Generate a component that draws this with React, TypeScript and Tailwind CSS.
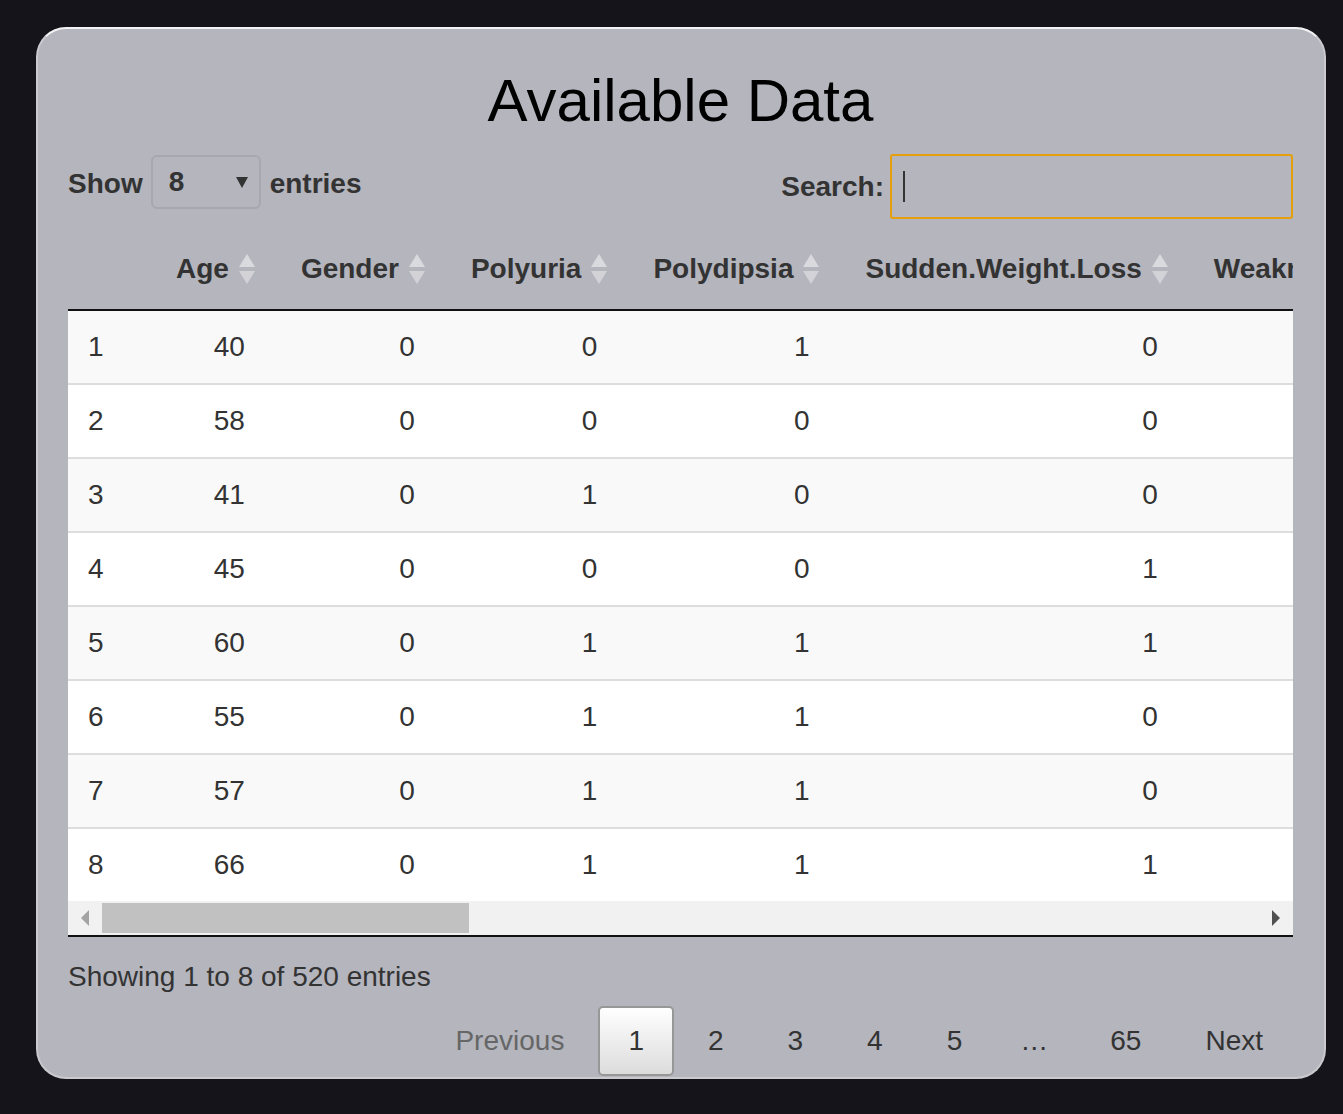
import React from 'react'

/* ─── Data ────────────────────────────────────────────── */
const columns = [
  'Age',
  'Gender',
  'Polyuria',
  'Polydipsia',
  'Sudden.Weight.Loss',
  'Weakness',
  'Polyphagia',
  'Genital.Thrush',
  'Visual.Blurring',
  'Itching',
  'Irritability',
  'Delayed.Healing',
  'Partial.Paresis',
  'Muscle.Stiffness',
  'Alopecia',
  'Obesity',
  'Class',
]

// fixed widths for the visible columns, the rest size themselves
const colWidth: Record<string, string> = {
  Age: 'w-[127px]',
  Gender: 'w-[170px]',
  Polyuria: 'w-[183px]',
  Polydipsia: 'w-[213px]',
  'Sudden.Weight.Loss': 'w-[348px]',
}

const rows: number[][] = [
  [40, 0, 0, 1, 0, 1, 0, 0, 0, 1, 0, 1, 0, 1, 1, 1, 1],
  [58, 0, 0, 0, 0, 1, 0, 0, 1, 0, 0, 0, 1, 0, 1, 0, 1],
  [41, 0, 1, 0, 0, 1, 1, 0, 0, 1, 0, 1, 0, 1, 1, 0, 1],
  [45, 0, 0, 0, 1, 1, 1, 1, 0, 1, 0, 1, 0, 0, 0, 0, 1],
  [60, 0, 1, 1, 1, 1, 1, 0, 1, 1, 1, 1, 1, 1, 1, 1, 1],
  [55, 0, 1, 1, 0, 1, 1, 0, 1, 1, 0, 1, 0, 1, 1, 1, 1],
  [57, 0, 1, 1, 0, 1, 1, 1, 0, 0, 0, 1, 1, 0, 0, 0, 1],
  [66, 0, 1, 1, 1, 1, 0, 0, 1, 1, 1, 0, 1, 1, 0, 0, 1],
]

const pages = ['1', '2', '3', '4', '5', '…', '65']

/* ─── Icons ───────────────────────────────────────────── */
function SortBoth() {
  return (
    <svg width="16" height="30" viewBox="0 0 16 30" className="absolute right-[10px] top-1/2 -translate-y-1/2">
      <polygon points="8,0 16,13 0,13" fill="#dadade" />
      <polygon points="0,17 16,17 8,30" fill="#d2d2d7" />
    </svg>
  )
}

/* ─── Component ───────────────────────────────────────── */
export default function App() {
  return (
    <div className="min-h-screen bg-[#15141a] pt-[27px] pb-[35px] font-['Liberation_Sans',Arial,sans-serif] text-[28px] leading-[40px] text-[#333]">
      <div className="ml-[36px] w-[1290px] rounded-[30px] border-2 border-[#c9c9ce] border-t-[#f2f2f4] bg-[#b4b5bd] pl-[30px] pr-[31px] pt-[39px] pb-[1px]">
        {/* Title */}
        <h1 className="text-center text-[60px] leading-[66px] font-normal text-black">Available Data</h1>

        {/* Controls */}
        <div className="mt-[20px] flex items-start justify-between">
          <div className="flex h-[56px] items-center font-bold">
            <span className="mt-[3px]">Show</span>
            <div className="mx-[8px] flex h-[54px] w-[110px] items-center justify-between rounded-[6px] border-2 border-[#a7a8af] pl-[16px] pr-[11px]">
              <span>8</span>
              <svg width="12" height="11" viewBox="0 0 12 11">
                <polygon points="0,0 12,0 6,11" fill="#333" />
              </svg>
            </div>
            <span className="mt-[3px] ml-[1px]">entries</span>
          </div>
          <div className="flex items-center font-bold">
            <span className="mr-[6px]">Search:</span>
            <div className="flex h-[65px] w-[403px] items-center rounded-[3px] border-2 border-[#e59f0c] pl-[11px]">
              <span className="block h-[31px] w-[2px] bg-[#333]" />
            </div>
          </div>
        </div>

        {/* Table */}
        <div className="mt-[10px] overflow-hidden">
          <table className="border-separate border-spacing-0 whitespace-nowrap">
            <thead>
              <tr>
                <th className="w-[72px] border-b-2 border-[#111] px-[36px] py-[20px] text-left font-bold"></th>
                {columns.map((c) => (
                  <th
                    key={c}
                    className={`relative border-b-2 border-[#111] px-[36px] py-[20px] text-right font-bold ${colWidth[c] ?? ''}`}
                  >
                    {c}
                    <SortBoth />
                  </th>
                ))}
              </tr>
            </thead>
            <tbody>
              {rows.map((r, i) => (
                <tr key={i} className={i % 2 === 0 ? 'bg-[#f9f9f9]' : 'bg-white'}>
                  <td className={`px-[20px] py-[16px] text-left ${i > 0 ? 'border-t-2 border-[#ddd]' : ''}`}>{i + 1}</td>
                  {r.map((v, j) => (
                    <td key={j} className={`px-[20px] py-[16px] text-right ${i > 0 ? 'border-t-2 border-[#ddd]' : ''}`}>
                      {v}
                    </td>
                  ))}
                </tr>
              ))}
            </tbody>
          </table>
        </div>

        {/* Scrollbar */}
        <div className="box-content flex h-[34px] items-stretch border-b-2 border-[#111] bg-[#f1f1f1]">
          <div className="flex w-[34px] items-center justify-center">
            <svg width="8" height="16" viewBox="0 0 8 16">
              <polygon points="8,0 8,16 0,8" fill="#a3a3a3" />
            </svg>
          </div>
          <div className="my-[2px] w-[367px] bg-[#c1c1c1]" />
          <div className="flex-1" />
          <div className="flex w-[34px] items-center justify-center">
            <svg width="8" height="16" viewBox="0 0 8 16">
              <polygon points="0,0 8,8 0,16" fill="#505050" />
            </svg>
          </div>
        </div>

        {/* Info */}
        <div className="pt-[20px]">Showing 1 to 8 of 520 entries</div>

        {/* Pagination */}
        <div className="mt-[9px] flex justify-end">
          <span className="ml-[4px] border-2 border-transparent px-[28px] py-[13px] text-[#666]">Previous</span>
          {pages.map((p) =>
            p === '…' ? (
              <span key={p} className="px-[28px] py-[15px]">
                …
              </span>
            ) : (
              <span
                key={p}
                className={`ml-[4px] rounded-[5px] border-2 px-[28px] py-[13px] ${
                  p === '1'
                    ? 'border-[#979797] bg-gradient-to-b from-white to-[#dcdcdc]'
                    : 'border-transparent'
                }`}
              >
                {p}
              </span>
            ),
          )}
          <span className="ml-[4px] border-2 border-transparent px-[28px] py-[13px]">Next</span>
        </div>
      </div>
    </div>
  )
}
